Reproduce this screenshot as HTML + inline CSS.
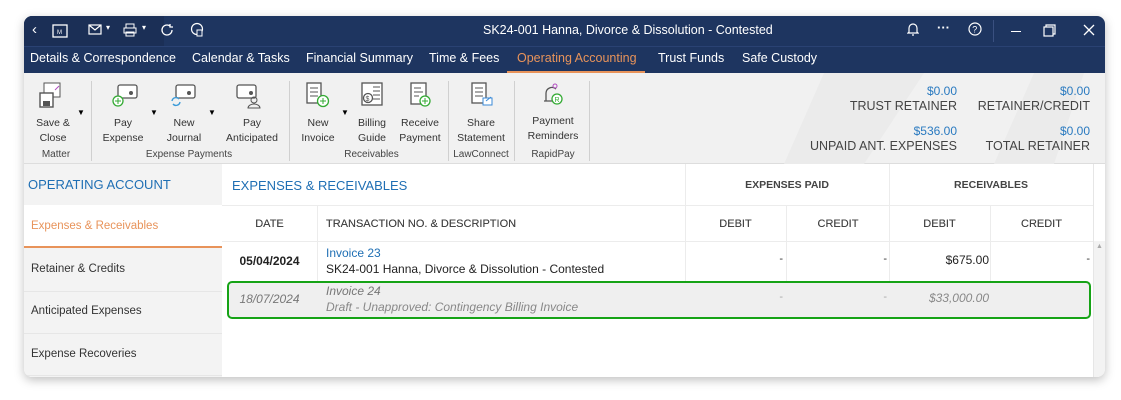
<!DOCTYPE html>
<html><head><meta charset="utf-8"><style>
*{box-sizing:border-box;margin:0;padding:0}
body{width:1121px;height:400px;background:#fff;font-family:"Liberation Sans",sans-serif;position:relative;overflow:hidden}
.win{position:absolute;left:24px;top:16px;width:1081px;height:361px;border-radius:8px;overflow:hidden;box-shadow:0 3px 10px rgba(0,0,0,.25);background:#fff}
.title{position:absolute;left:0;top:0;width:100%;height:30px;background:#1e3560;color:#fff}
.nav{position:absolute;left:0;top:30px;width:100%;height:27px;background:#1e3560;border-top:1px solid #2a4273}
.nav span{position:absolute;top:4px;font-size:12.5px;color:#fff}
.ribbon{position:absolute;left:0;top:57px;width:100%;height:91px;background:#f1f1f1;border-bottom:1px solid #ddd}
.rb{position:absolute;font-size:10.5px;color:#333;text-align:center;line-height:15px}
.grp{position:absolute;top:76px;font-size:10px;color:#444;text-align:center}
.sep{position:absolute;top:8px;width:1px;height:80px;background:#d0d0d0}
.sum{position:absolute;text-align:right;font-size:12px;line-height:15px}
.sum b{display:block;color:#2a7ac0;font-weight:normal}
.sum i{font-style:normal;color:#444;font-size:12.5px}
.left{position:absolute;left:0;top:148px;width:198px;height:213px;background:#f3f3f3}
.left div{position:absolute;left:7px;font-size:11.5px;color:#333}
.c{position:absolute;font-size:11px;color:#333}
.h{color:#444;text-shadow:0 0 0.3px #444}
.vl{position:absolute;width:1px;background:#ececec}
.hl{position:absolute;height:1px;background:#ececec}
svg{position:absolute}
</style></head><body>
<div class="win">
<div class="title">
<div style="position:absolute;left:0;top:0;width:140px;height:30px;background:#1b2f56"></div>
<span style="position:absolute;left:8px;top:5px;font-size:15px">‹</span>
<svg style="left:28px;top:7px" width="16" height="15" viewBox="0 0 16 15"><rect x="1" y="2" width="14" height="12" fill="none" stroke="#fff" stroke-width="1.3"/><text x="5" y="11" font-size="6" fill="#fff" font-family="Liberation Sans">M</text></svg>
<svg style="left:64px;top:8px" width="14" height="12"><rect x="1" y="1" width="12" height="9" fill="none" stroke="#fff" stroke-width="1.2"/><path d="M1 1l6 5 6-5" fill="none" stroke="#fff" stroke-width="1.2"/></svg>
<span style="position:absolute;left:82px;top:7px;font-size:8px">▾</span>
<svg style="left:99px;top:7px" width="14" height="14"><rect x="3" y="1" width="8" height="4" fill="none" stroke="#fff"/><rect x="1" y="5" width="12" height="5" fill="none" stroke="#fff"/><rect x="3" y="9" width="8" height="4" fill="none" stroke="#fff"/></svg>
<span style="position:absolute;left:118px;top:7px;font-size:8px">▾</span>
<svg style="left:136px;top:7px" width="14" height="14"><path d="M12 7a5 5 0 1 1-2-4M10 1v3h3" fill="none" stroke="#fff" stroke-width="1.3"/></svg>
<svg style="left:166px;top:6px" width="14" height="15"><circle cx="7" cy="7" r="5.5" fill="none" stroke="#fff" stroke-width="1.2"/><rect x="7" y="8" width="5" height="6" fill="#1e3560" stroke="#fff"/></svg>
<span style="position:absolute;left:459px;top:7px;font-size:12.5px">SK24-001 Hanna, Divorce &amp; Dissolution - Contested</span>
<svg style="left:883px;top:6px" width="12" height="14"><path d="M2 10V6a4 4 0 0 1 8 0v4l1 1H1zM5 13h2" fill="none" stroke="#fff" stroke-width="1.2"/></svg>
<span style="position:absolute;left:913px;top:4px;font-size:13px;font-weight:bold">···</span>
<svg style="left:944px;top:6px" width="14" height="14"><circle cx="7" cy="7" r="6" fill="none" stroke="#fff" stroke-width="1.2"/><text x="4.3" y="10.5" font-size="9" fill="#fff" font-family="Liberation Sans">?</text></svg>
<div style="position:absolute;left:969px;top:4px;width:1px;height:22px;background:#3a5080"></div>
<div style="position:absolute;left:987px;top:15px;width:10px;height:1px;background:#fff"></div>
<svg style="left:1019px;top:8px" width="13" height="13"><rect x="1" y="3" width="9" height="9" fill="none" stroke="#fff" stroke-width="1.2"/><path d="M3 3V1h9v9h-2" fill="none" stroke="#fff" stroke-width="1.2"/></svg>
<svg style="left:1059px;top:8px" width="12" height="12"><path d="M1 1l10 10M11 1L1 11" stroke="#fff" stroke-width="1.3"/></svg>
</div>
<div class="nav">
<span style="left:6px">Details &amp; Correspondence</span>
<span style="left:168px">Calendar &amp; Tasks</span>
<span style="left:282px">Financial Summary</span>
<span style="left:405px">Time &amp; Fees</span>
<span style="left:493px;color:#e8935a">Operating Accounting</span>
<span style="left:634px">Trust Funds</span>
<span style="left:718px">Safe Custody</span>
<div style="position:absolute;left:483px;top:24px;width:138px;height:2px;background:#e8935a"></div>
</div>
<div class="ribbon">
<svg style="left:720px;top:0" width="361" height="91"><path d="M40 91L80 0h100L120 91z" fill="#ebebeb"/><path d="M250 91L290 0h50L310 91z" fill="#ebebeb"/></svg>
<svg style="left:14px;top:9px" width="28" height="28"><rect x="6" y="1" width="16" height="14" fill="#fff" stroke="#555"/><rect x="2" y="11" width="13" height="14" fill="#fff" stroke="#555" stroke-width="1.4"/><rect x="5" y="19" width="7" height="5" fill="#555"/><path d="M17 8l4-4" stroke="#b04cc0"/></svg>
<svg style="left:87px;top:9px" width="28" height="28"><rect x="7" y="3" width="19" height="13" rx="2" fill="#fff" stroke="#555" stroke-width="1.3"/><circle cx="20" cy="11" r="2" fill="#555"/><circle cx="7" cy="19" r="5" fill="#fff" stroke="#3a3" stroke-width="1.3"/><path d="M7 16v6M4 19h6" stroke="#3a3"/></svg>
<svg style="left:145px;top:9px" width="28" height="28"><rect x="7" y="3" width="19" height="13" rx="2" fill="#fff" stroke="#555" stroke-width="1.3"/><circle cx="20" cy="11" r="2" fill="#555"/><path d="M3 19a4 4 0 0 1 7-2M11 20a4 4 0 0 1-7 2" fill="none" stroke="#3a9ad8" stroke-width="1.4"/></svg>
<svg style="left:210px;top:9px" width="28" height="28"><rect x="3" y="3" width="19" height="13" rx="2" fill="#fff" stroke="#555" stroke-width="1.3"/><circle cx="17" cy="11" r="2" fill="#555"/><circle cx="20" cy="18" r="3" fill="none" stroke="#555"/><path d="M14 26a6 4 0 0 1 12 0z" fill="none" stroke="#555"/></svg>
<svg style="left:279px;top:8px" width="28" height="28"><rect x="4" y="2" width="14" height="20" fill="#fff" stroke="#555" stroke-width="1.3"/><path d="M7 7h8M7 11h8M7 15h8" stroke="#555"/><circle cx="20" cy="20" r="5.5" fill="#fff" stroke="#3a3" stroke-width="1.3"/><path d="M20 17v6M17 20h6" stroke="#3a3"/></svg>
<svg style="left:335px;top:8px" width="28" height="28"><rect x="3" y="2" width="20" height="22" fill="#fff" stroke="#555" stroke-width="1.3"/><path d="M14 6h7M14 10h7M14 14h7M14 18h7" stroke="#555"/><circle cx="9" cy="17" r="4.5" fill="#fff" stroke="#555" stroke-width="1.3"/><text x="6.5" y="20" font-size="7" fill="#555">$</text></svg>
<svg style="left:382px;top:8px" width="28" height="28"><rect x="5" y="2" width="15" height="21" fill="#fff" stroke="#555" stroke-width="1.3"/><path d="M8 7h7M8 11h9M8 15h5" stroke="#555"/><circle cx="19" cy="20" r="5" fill="#fff" stroke="#3a3" stroke-width="1.3"/><path d="M19 17v6M16 20h6" stroke="#3a3"/></svg>
<svg style="left:444px;top:8px" width="28" height="28"><rect x="4" y="2" width="14" height="20" fill="#fff" stroke="#555" stroke-width="1.3"/><path d="M7 7h8M7 11h8M7 15h8" stroke="#555"/><rect x="15" y="17" width="9" height="7" fill="#fff" stroke="#3a8ad8"/><path d="M18 20l5-4" stroke="#3a8ad8"/></svg>
<svg style="left:516px;top:8px" width="28" height="28"><path d="M6 20V12a6 6 0 0 1 10-4M4 20h10" fill="none" stroke="#555" stroke-width="1.3"/><circle cx="15" cy="5" r="2" fill="none" stroke="#b04cc0"/><circle cx="17" cy="18" r="5" fill="#fff" stroke="#3a3" stroke-width="1.3"/><text x="14.5" y="21" font-size="7" fill="#3a3">R</text></svg>
<div class="rb" style="left:6px;top:43px;width:46px">Save &amp;<br>Close</div>
<span style="position:absolute;left:53px;top:35px;font-size:8px">▼</span>
<div class="grp" style="left:6px;width:52px">Matter</div>
<div class="sep" style="left:67px"></div>
<div class="rb" style="left:76px;top:43px;width:46px">Pay<br>Expense</div>
<span style="position:absolute;left:126px;top:35px;font-size:8px">▼</span>
<div class="rb" style="left:135px;top:43px;width:50px">New<br>Journal</div>
<span style="position:absolute;left:184px;top:35px;font-size:8px">▼</span>
<div class="rb" style="left:198px;top:43px;width:60px">Pay<br>Anticipated</div>
<div class="grp" style="left:110px;width:110px">Expense Payments</div>
<div class="sep" style="left:265px"></div>
<div class="rb" style="left:272px;top:43px;width:44px">New<br>Invoice</div>
<span style="position:absolute;left:317px;top:35px;font-size:8px">▼</span>
<div class="rb" style="left:328px;top:43px;width:40px">Billing<br>Guide</div>
<div class="rb" style="left:371px;top:43px;width:50px">Receive<br>Payment</div>
<div class="grp" style="left:300px;width:95px">Receivables</div>
<div class="sep" style="left:424px"></div>
<div class="rb" style="left:430px;top:43px;width:54px">Share<br>Statement</div>
<div class="grp" style="left:427px;width:60px">LawConnect</div>
<div class="sep" style="left:490px"></div>
<div class="rb" style="left:498px;top:41px;width:62px">Payment<br>Reminders</div>
<div class="grp" style="left:498px;width:62px">RapidPay</div>
<div class="sep" style="left:565px"></div>
<div class="sum" style="left:780px;top:11px;width:153px"><b>$0.00</b><i>TRUST RETAINER</i></div>
<div class="sum" style="left:920px;top:11px;width:146px"><b>$0.00</b><i>RETAINER/CREDIT</i></div>
<div class="sum" style="left:760px;top:51px;width:173px"><b>$536.00</b><i>UNPAID ANT. EXPENSES</i></div>
<div class="sum" style="left:920px;top:51px;width:146px"><b>$0.00</b><i>TOTAL RETAINER</i></div>
</div>
<div class="left">
<div style="top:13px;font-size:13px;color:#1f6fb4;left:4px">OPERATING ACCOUNT</div>
<div style="left:0;top:41px;width:198px;height:43px;background:#fff;border-bottom:2px solid #e8935a"></div>
<div style="top:56px;color:#e8935a">Expenses &amp; Receivables</div>
<div style="top:99px">Retainer &amp; Credits</div>
<div style="left:0;top:127px;width:198px;height:1px;background:#e6e6e6"></div>
<div style="top:141px">Anticipated Expenses</div>
<div style="left:0;top:169px;width:198px;height:1px;background:#e6e6e6"></div>
<div style="top:184px">Expense Recoveries</div>
<div style="left:0;top:211px;width:198px;height:1px;background:#e6e6e6"></div>
</div>
<div class="c" style="left:208px;top:162px;font-size:13px;color:#1f6fb4">EXPENSES &amp; RECEIVABLES</div>
<div class="hl" style="left:198px;top:189px;width:871px"></div>
<div class="hl" style="left:198px;top:225px;width:871px"></div>
<div class="vl" style="left:661px;top:148px;height:117px"></div>
<div class="vl" style="left:865px;top:148px;height:117px"></div>
<div class="vl" style="left:1069px;top:148px;height:213px;background:#e6e6e6"></div>
<div style="position:absolute;left:1070px;top:225px;width:11px;height:136px;background:#f3f3f3"></div>
<span style="position:absolute;left:1072px;top:227px;font-size:7px;color:#aaa">▲</span>
<div class="vl" style="left:293px;top:189px;height:76px"></div>
<div class="vl" style="left:762px;top:189px;height:76px"></div>
<div class="vl" style="left:966px;top:189px;height:76px"></div>
<div class="c" style="left:661px;top:163px;width:204px;text-align:center;font-size:10.5px;font-weight:bold;color:#444">EXPENSES PAID</div>
<div class="c" style="left:865px;top:163px;width:204px;text-align:center;font-size:10.5px;font-weight:bold;color:#444">RECEIVABLES</div>
<div class="c h" style="left:198px;top:202px;width:95px;text-align:center">DATE</div>
<div class="c h" style="left:302px;top:202px">TRANSACTION NO. &amp; DESCRIPTION</div>
<div class="c h" style="left:661px;top:202px;width:101px;text-align:center">DEBIT</div>
<div class="c h" style="left:762px;top:202px;width:104px;text-align:center">CREDIT</div>
<div class="c h" style="left:865px;top:202px;width:101px;text-align:center">DEBIT</div>
<div class="c h" style="left:966px;top:202px;width:103px;text-align:center">CREDIT</div>
<div class="c" style="left:198px;top:238px;width:95px;text-align:center;font-size:12px;font-weight:bold;color:#222">05/04/2024</div>
<div class="c" style="left:302px;top:230px;font-size:12px;color:#1f6fb4">Invoice 23</div>
<div class="c" style="left:302px;top:246px;font-size:12px;color:#222">SK24-001 Hanna, Divorce &amp; Dissolution - Contested</div>
<div class="c" style="left:661px;top:237px;width:98px;text-align:right">-</div>
<div class="c" style="left:762px;top:237px;width:101px;text-align:right">-</div>
<div class="c" style="left:865px;top:237px;width:100px;text-align:right;font-size:12px;color:#222">$675.00</div>
<div class="c" style="left:966px;top:237px;width:100px;text-align:right">-</div>
<div style="position:absolute;left:203px;top:265px;width:864px;height:38px;background:#efefef;border:2.5px solid #16a316;border-radius:5px"></div>
<div class="c" style="left:198px;top:276px;width:95px;text-align:center;font-size:12px;font-style:italic;color:#777">18/07/2024</div>
<div class="c" style="left:302px;top:268px;font-size:12px;font-style:italic;color:#777">Invoice 24</div>
<div class="c" style="left:302px;top:284px;font-size:12px;font-style:italic;color:#888">Draft - Unapproved: Contingency Billing Invoice</div>
<div class="c" style="left:661px;top:275px;width:98px;text-align:right;color:#aaa">-</div>
<div class="c" style="left:762px;top:275px;width:101px;text-align:right;color:#aaa">-</div>
<div class="c" style="left:865px;top:275px;width:100px;text-align:right;font-size:12px;font-style:italic;color:#888">$33,000.00</div>
</div>
</body></html>
